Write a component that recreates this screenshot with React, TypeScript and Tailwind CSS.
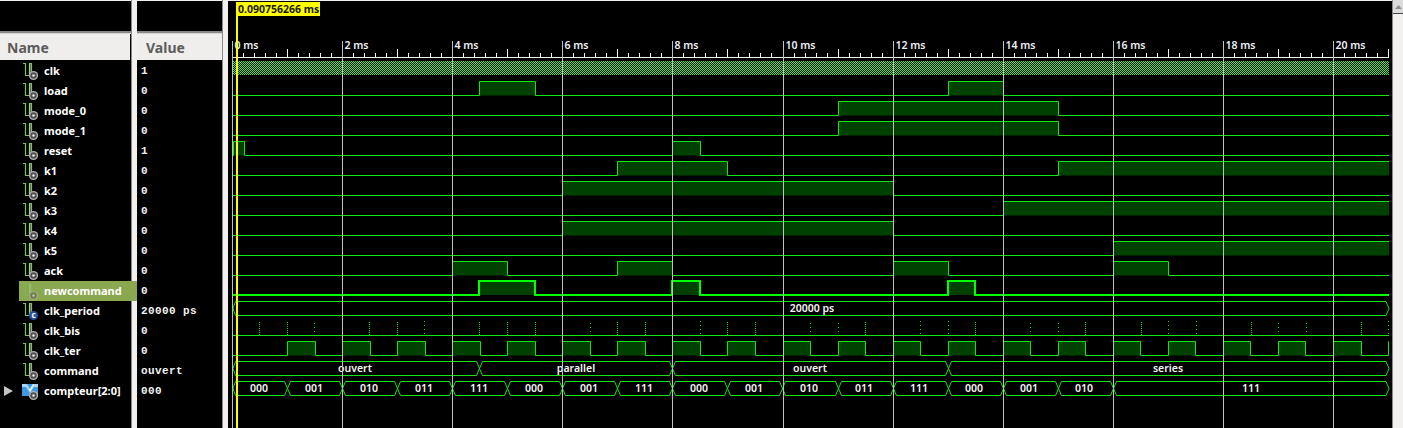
import React from 'react';

type Kind = 'wire' | 'const' | 'bus';

const SIGNALS: { name: string; value: string; kind: Kind; selected?: boolean }[] = [
  { name: 'clk', value: '1', kind: 'wire' },
  { name: 'load', value: '0', kind: 'wire' },
  { name: 'mode_0', value: '0', kind: 'wire' },
  { name: 'mode_1', value: '0', kind: 'wire' },
  { name: 'reset', value: '1', kind: 'wire' },
  { name: 'k1', value: '0', kind: 'wire' },
  { name: 'k2', value: '0', kind: 'wire' },
  { name: 'k3', value: '0', kind: 'wire' },
  { name: 'k4', value: '0', kind: 'wire' },
  { name: 'k5', value: '0', kind: 'wire' },
  { name: 'ack', value: '0', kind: 'wire' },
  { name: 'newcommand', value: '0', kind: 'wire', selected: true },
  { name: 'clk_period', value: '20000 ps', kind: 'const' },
  { name: 'clk_bis', value: '0', kind: 'wire' },
  { name: 'clk_ter', value: '0', kind: 'wire' },
  { name: 'command', value: 'ouvert', kind: 'wire' },
  { name: 'compteur[2:0]', value: '000', kind: 'bus' },
];

const LINE = '#14e614';
const START = 233;
const END = 1389;

// time in ms to page x
const X = (t: number) => Math.round(232 + 55.05 * t);

const hi = (row: number) => 61.5 + row * 20;
const lo = (row: number) => 75.5 + row * 20;

function Pulses({ row, edges, thick }: { row: number; edges: [number, number | null][]; thick?: boolean }) {
  const h = hi(row) - (thick ? 0.5 : 0);
  const l = lo(row) - (thick ? 0.5 : 0);
  const nudge = thick ? 0 : 0.5;
  let d = `M${START} ${l}`;
  const fills: React.ReactNode[] = [];
  edges.forEach(([a, b], i) => {
    const x1 = Math.max(a === 0 ? START : X(a), START);
    const x2 = b === null ? END : X(b);
    const p1 = x1 + nudge;
    const p2 = x2 + nudge;
    d += ` L${p1} ${l} L${p1} ${h}`;
    d += b === null ? ` L${END} ${h}` : ` L${p2} ${h} L${p2} ${l}`;
    fills.push(<rect key={i} x={x1} y={h} width={x2 - x1} height={l - h} fill="#004000" />);
  });
  if (edges.length === 0 || edges[edges.length - 1][1] !== null) d += ` L${END} ${l}`;
  return (
    <g>
      {fills}
      <path d={d} fill="none" stroke={thick ? '#00ff00' : LINE} strokeWidth={thick ? 2 : 1} />
    </g>
  );
}

function Bus({ row, stops, labels }: { row: number; stops: number[]; labels: [string, number][] }) {
  const h = hi(row);
  const l = lo(row);
  const m = (h + l) / 2;
  let d = `M${START} ${m} L${START + 2.5} ${h} M${START} ${m} L${START + 2.5} ${l}`;
  const xs = [START, ...stops, END];
  xs.forEach((x, i) => {
    if (i === xs.length - 1) return;
    const x2 = xs[i + 1];
    const from = i === 0 ? START + 2.5 : x + 3.5;
    const to = x2 === END ? END - 3 : x2 - 2.5;
    d += ` M${from} ${h} L${to} ${h} M${from} ${l} L${to} ${l}`;
    if (x2 !== END) d += ` M${to} ${h} L${x2 + 3.5} ${l} M${to} ${l} L${x2 + 3.5} ${h}`;
  });
  d += ` M${END - 3} ${h} L${END} ${m} L${END - 3} ${l}`;
  return (
    <g>
      <path d={d} fill="none" stroke={LINE} strokeWidth={1} />
      {labels.map(([text, x], i) => (
        <text key={i} x={x} y={l - 3.5} textAnchor="middle" className="fill-[#f4f4f4] text-[10.5px] font-semibold">
          {text}
        </text>
      ))}
    </g>
  );
}

const DENSE = [259, 287, 369, 397, 479, 507, 535, 617, 645, 727, 755, 865, 975, 1085, 1141, 1251, 1361];
const SPARSE = [314, 590, 810, 838, 1030, 1058, 1278, 1306];
const TALL = [424, 700, 920, 948, 1168, 1196, 1388];

function Ruler() {
  const ticks: React.ReactNode[] = [];
  for (let i = 0; i <= 105; i++) {
    const t = i / 5;
    const x = X(t) + 0.5;
    const top = i % 10 === 0 ? 41 : i % 5 === 0 ? 49 : 53;
    ticks.push(<line key={i} x1={x} x2={x} y1={top} y2={57} stroke="#f2f2f2" />);
  }
  return (
    <g>
      {ticks}
      <line x1={232} x2={END} y1={57.5} y2={57.5} stroke="#f2f2f2" />
      {Array.from({ length: 11 }, (_, i) => (
        <text key={i} x={X(i * 2) + 2.5} y={48.5} className="fill-[#eef2f6] text-[10.5px] font-semibold">
          {i * 2} ms
        </text>
      ))}
    </g>
  );
}

function Waves() {
  const half: [number, number][] = Array.from({ length: 20 }, (_, i) => [i + 1, i + 1.5]);
  return (
    <svg
      viewBox="228 0 1164 428"
      className="block h-[428px] w-[1164px] shrink-0 bg-black font-['Noto_Sans',sans-serif]"
    >
      <defs>
        <pattern id="dither" width="2" height="2" patternUnits="userSpaceOnUse" x="233" y="61">
          <rect width="1" height="1" fill="#3cf03c" shapeRendering="crispEdges" />
          <rect x="1" y="1" width="1" height="1" fill="#3cf03c" shapeRendering="crispEdges" />
        </pattern>
      </defs>
      <rect x={228} y={0} width={1164} height={1} fill="#f2f1f0" />
      <Ruler />
      <rect x={START} y={61} width={END - START} height={14} fill="url(#dither)" />
      <Pulses row={1} edges={[[4.48, 5.5], [13, 14]]} />
      <Pulses row={2} edges={[[11, 15]]} />
      <Pulses row={3} edges={[[11, 15]]} />
      <Pulses row={4} edges={[[0, 0.22], [8, 8.5]]} />
      <Pulses row={5} edges={[[7, 9], [15, null]]} />
      <Pulses row={6} edges={[[6, 12]]} />
      <Pulses row={7} edges={[[14, null]]} />
      <Pulses row={8} edges={[[6, 12]]} />
      <Pulses row={9} edges={[[16, null]]} />
      <Pulses row={10} edges={[[4, 5], [7, 8], [12, 13], [16, 17]]} />
      <Pulses row={11} edges={[[4.48, 5.5], [8, 8.5], [13, 13.5]]} thick />
      <Bus row={12} stops={[]} labels={[['20000 ps', 812]]} />

      <line x1={START} x2={END} y1={335.5} y2={335.5} stroke={LINE} />
      {DENSE.map((x) => (
        <line key={x} x1={x + 0.5} x2={x + 0.5} y1={322} y2={335} stroke="#00e600" strokeDasharray="1 1" />
      ))}
      {SPARSE.map((x) => (
        <line key={x} x1={x + 0.5} x2={x + 0.5} y1={323} y2={332} stroke="#00e600" strokeDasharray="1 3" />
      ))}
      {TALL.map((x) => (
        <line key={x} x1={x + 0.5} x2={x + 0.5} y1={321} y2={334} stroke="#00e600" strokeDasharray="1 3" />
      ))}

      <Pulses row={14} edges={[...half, [21, null]].map(([a, b]) => [a, b] as [number, number | null])} />
      <Bus
        row={15}
        stops={[479, 672, 948]}
        labels={[
          ['ouvert', 355],
          ['parallel', 576],
          ['ouvert', 810],
          ['series', 1168],
        ]}
      />
      <Bus
        row={16}
        stops={[287, 342, 397, 452, 507, 562, 617, 672, 727, 782, 838, 893, 948, 1003, 1058, 1113]}
        labels={[
          ['000', 259],
          ['001', 314],
          ['010', 369],
          ['011', 424],
          ['111', 479],
          ['000', 534],
          ['001', 589],
          ['111', 644],
          ['000', 699],
          ['001', 754],
          ['010', 809],
          ['011', 864],
          ['111', 919],
          ['000', 974],
          ['001', 1029],
          ['010', 1084],
          ['111', 1251],
        ]}
      />

      {Array.from({ length: 11 }, (_, i) => (
        <line key={i} x1={X(i * 2) + 0.5} x2={X(i * 2) + 0.5} y1={41} y2={428} stroke="#c0c0c0" />
      ))}

      <rect x={236} y={16} width={2} height={412} fill="#ffff00" />
      <rect x={236} y={2} width={84} height={14} fill="#ffff00" />
      <text x={238} y={13} className="fill-[#1a1a00] text-[10.5px] font-bold">
        0.090756266 ms
      </text>
    </svg>
  );
}

function SignalIcon({ kind, selected }: { kind: Kind; selected?: boolean }) {
  const dim = selected ? 'opacity-50' : '';
  return (
    <svg viewBox="0 0 18 20" className={`h-5 w-[18px] shrink-0 ${dim}`}>
      {kind === 'bus' ? (
        <g>
          <path d="M0 3 H16 V15 H0 Z" fill="#3f97e6" />
          <path d="M0 3 H5 L8 8 L11 3 H16 V6 H12 L8 12 L4 6 H0 Z" fill="#a9d4f6" />
          <path d="M7 8 L8 8 L11 3 L12 3 L8 11 Z" fill="#f2f8fd" />
        </g>
      ) : (
        <g fill="none">
          <path d="M1 2.5 H3.5 V14.5 H7.5 V2.5 H9.5 V12" stroke="#7fc060" strokeWidth="1.2" />
          <path d="M8 3 V14" stroke="#eeeeee" strokeWidth="0.7" />
        </g>
      )}
      {kind === 'const' ? (
        <g>
          <circle cx="11.5" cy="14.5" r="4.5" fill="#2b4f9f" />
          <text x="11.5" y="17" textAnchor="middle" className="fill-white text-[8px] font-bold">
            c
          </text>
        </g>
      ) : (
        <g>
          <circle cx="11.5" cy="14.5" r="4.6" fill="#b0b0b0" />
          <circle cx="11.5" cy="14.5" r="3.2" fill="#505050" />
          <circle cx="11.5" cy="14.5" r="1.2" fill="#eeeeee" />
        </g>
      )}
    </svg>
  );
}

function Header({ label, className }: { label: string; className: string }) {
  return (
    <>
      <div className="h-[1px] bg-[#f2f1f0]" />
      <div className="h-[30px] bg-black" />
      <div className="h-[2px] bg-[#8a8a8a]" />
      <div className="h-[1px] bg-[#d5d5d5]" />
      <div
        className={`flex h-[26px] items-center bg-[#efeeed] text-[14px] font-bold text-[#5c5c5c] ${className}`}
      >
        {label}
      </div>
      <div className="h-[1px] bg-black" />
    </>
  );
}

export default function App() {
  return (
    <div className="flex h-[428px] w-[1403px] overflow-hidden bg-[#f2f1f0] font-['Noto_Sans',sans-serif]">
      <div className="flex w-[132px] shrink-0 flex-col border-r border-[#8a8a8a] bg-black">
        <Header label="Name" className="mr-[1px] pl-[7px]" />
        {SIGNALS.map((s) => (
          <div key={s.name} className="flex h-5 items-center">
            <div className="flex w-[19px] shrink-0 items-center pl-[4px]">
              {s.kind === 'bus' && (
                <svg viewBox="0 0 9 10" className="h-[10px] w-[9px]">
                  <path d="M0 0 L9 5 L0 10 Z" fill="#c4c4c4" />
                </svg>
              )}
            </div>
            <div
              className={`relative flex h-5 min-w-0 flex-1 items-center pl-[3px] ${
                s.selected ? 'z-10 -mr-[6px] bg-[#8aa850]' : ''
              }`}
            >
              <SignalIcon kind={s.kind} selected={s.selected} />
              <span className="ml-[4px] whitespace-nowrap text-[11px] font-bold text-white">{s.name}</span>
            </div>
          </div>
        ))}
      </div>
      <div className="w-[5px] shrink-0" />
      <div className="flex w-[86px] shrink-0 flex-col border-r border-[#8a8a8a] bg-black">
        <Header label="Value" className="pl-[9px]" />
        {SIGNALS.map((s) => (
          <div
            key={s.name}
            className="flex h-5 items-center pl-[4px] font-['Liberation_Mono',monospace] text-[11px] font-bold tracking-[0.4px] text-[#f0f0f0]"
          >
            {s.value}
          </div>
        ))}
      </div>
      <div className="w-[5px] shrink-0" />
      <Waves />
      <div className="flex w-[11px] shrink-0 flex-col border-l border-[#8a8a8a]">
        <div className="flex h-[14px] items-center justify-center border-b border-[#444] bg-[#dcdcdc]">
          <svg viewBox="0 0 7 4" className="h-[4px] w-[7px]">
            <path d="M0 4 L3.5 0 L7 4 Z" fill="#8c8c8c" />
          </svg>
        </div>
      </div>
    </div>
  );
}
